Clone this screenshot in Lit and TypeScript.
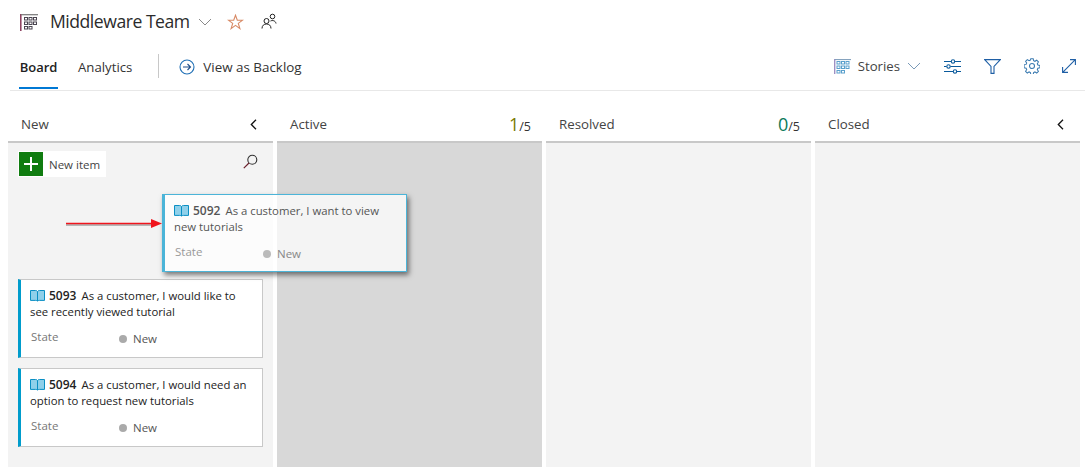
import { LitElement, html, css, svg } from "lit";
import { customElement } from "lit/decorators.js";

const cells = (c1: string) => svg`
  <g fill="none" stroke="${c1}" stroke-width="1">
    <rect x="4.500" y="3.500" width="3" height="2.500"/><rect x="9" y="3.500" width="3" height="2.500"/><rect x="13.500" y="3.500" width="3" height="2.500"/>
    <rect x="4.500" y="8" width="3" height="2.500"/><rect x="9" y="8" width="3" height="2.500"/><rect x="13.500" y="8" width="3" height="2.500"/>
    <rect x="4.500" y="12.500" width="3" height="2.500"/><rect x="9" y="12.500" width="3" height="2.500"/>
  </g>`;

const book = html`<svg class="book" width="15" height="13" viewBox="0 0 15 13">
  <path d="M.5 1.500h5c1 0 1.500.3 2 1v9.500c-.5-.4-1-.6-2-.6h-5z" fill="#8fd0ea" stroke="#0a8fc4"/>
  <path d="M14.500 1.500h-5c-1 0-1.500.3-2 1v9.500c.5-.4 1-.6 2-.6h5z" fill="#8fd0ea" stroke="#0a8fc4"/>
</svg>`;

const collapse = html`<svg class="coll" width="7" height="11" viewBox="0 0 7 11"><path d="M6 .8L1.300 5.500 6 10.200" fill="none" stroke="#111" stroke-width="1.300"/></svg>`;

@customElement("app-root")
export class AppRoot extends LitElement {
  static styles = css`
    :host { display: block; width: 1085px; height: 467px; overflow: hidden; position: relative; background: #fff; font-family: "Open Sans", "Noto Sans", sans-serif; color: #333; }
    svg { display: block; flex: none; }
    .title { height: 45px; box-sizing: border-box; display: flex; align-items: center; padding: 0 0 1px 20px; }
    .title h1 { margin: 0 0 2px 12px; font-size: 17.6px; font-weight: 400; color: #2b2b2b; letter-spacing: -0.48px; line-height: 24px; width: 139px; white-space: nowrap; }
    .title .chev { margin-left: 9px; }
    .title .star { margin-left: 15px; }
    .title .team { margin: -2px 0 0 17px; }
    .nav { height: 46px; box-sizing: border-box; margin-left: 10px; border-bottom: 1px solid #e8e8e8; display: flex; align-items: flex-start; padding-left: 9px; padding-right: 9px; font-size: 13.2px; }
    .tab { display: flex; align-items: center; box-sizing: border-box; height: 44px; padding-top: 1px; border-bottom: 2px solid transparent; color: #333; }
    .tab.on { width: 39px; border-bottom-color: #0078d4; font-weight: 600; font-size: 13px; color: #222; margin-right: 20px; justify-content: center; }
    .sep { width: 1px; height: 24px; background: #c8c8c8; margin: 9px 20px 0 26px; }
    .back { display: flex; align-items: center; gap: 8px; height: 44px; color: #333; }
    .back span { font-size: 13.4px; }
    .spacer { flex: 1; }
    .tools { display: flex; align-items: center; height: 42px; }
    .stories { display: flex; align-items: center; gap: 7px; margin-right: 23px; color: #444; }
    .tools .ic { margin-left: 23px; }
    .tools .ic.exp { margin-left: 22px; }
    .tools .ic:first-of-type { margin-left: 0; }
    .board { display: flex; gap: 4px; padding: 19px 5px 0 8px; height: 376px; box-sizing: border-box; }
    .col { width: 265px; display: flex; flex-direction: column; flex: none; }
    .head { display: flex; align-items: center; justify-content: space-between; padding: 0 10px 4px 13px; font-size: 13.3px; color: #444; flex: none; border-bottom: 2.500px solid #c8c8c8; box-sizing: border-box; height: 33px; }
    .coll { margin: 2px 6px 0 0; }
    .count { font-size: 12.500px; color: #333; display: flex; align-items: baseline; padding-right: 1px; margin-top: 2px; }
    .count b { font-weight: 400; font-size: 18px; line-height: 20px; }
    .count .a { color: #7a7a00; }
    .count .z { color: #0b7a5a; }
    .body { flex: 1; background: #f3f3f3; position: relative; padding: 0 10px; }
    .body.drop { background: #d8d8d8; }
    .add { display: flex; justify-content: space-between; padding: 8px 5px 0 0; height: 26px; }
    .btn { display: flex; align-items: center; background: #fff; height: 26px; font-size: 11.500px; color: #444; padding-right: 6px; padding-left: 1px; }
    .plus { width: 24px; height: 24px; background: #107c10; display: flex; align-items: center; justify-content: center; margin-right: 6px; }
    .search { margin-top: 3px; }
    .gap { height: 102px; }
    .card { width: 245px; box-sizing: border-box; background: #fff; border: 1px solid #c8c8c8; border-left: 3px solid #009ccc; padding: 8px 9px 0 9px; height: 79px; margin-bottom: 10px; font-size: 11.350px; color: #222; line-height: 16px; }
    .line { display: block; }
    .line svg { display: inline-block; vertical-align: -2px; margin-right: 4px; }
    .line b { font-size: 12px; font-weight: 600; margin-right: 5px; }
    .meta { display: flex; font-size: 11.500px; margin-top: 9px; margin-left: 1px; line-height: 16px; }
    .meta .lbl { width: 88px; color: #777; }
    .meta .val { display: flex; align-items: center; gap: 6px; margin-top: 2px; color: #555; }
    .dot { width: 8px; height: 8px; border-radius: 50%; background: #aaa; }
    .float { position: absolute; left: 162px; top: 194px; margin: 0; width: 245px; height: 78px; border: 1px solid #4bb4d8; border-left: 3px solid #4bb4d8; background: rgba(255,255,255,.72); box-shadow: 2px 3px 5px rgba(0,0,0,.5); color: #555; }
    .float .lbl { color: #999; }
    .float .val { color: #888; }
    .float .dot { background: #bbb; }
    .arrow { position: absolute; left: 64px; top: 216px; }
  `;

  private card(id: string, text: string, cls = "") {
    return html`<div class="card ${cls}">
      <div class="line">${book}<b>${id}</b>${text}</div>
      <div class="meta"><span class="lbl">State</span><span class="val"><i class="dot"></i>New</span></div>
    </div>`;
  }

  render() {
    return html`
      <div class="title">
        <svg width="18" height="17" viewBox="0 0 18 17"><path d="M.8 0v17" stroke="#8a3a5a" stroke-width="1.500"/><path d="M1 .700h17" stroke="#777" stroke-width="1.200"/>${cells("#4a4550")}</svg>
        <h1>Middleware Team</h1>
        <svg class="chev" width="14" height="8" viewBox="0 0 14 8"><path d="M1 1l6 6 6-6" fill="none" stroke="#8a8a8a" stroke-width="1"/></svg>
        <svg class="star" width="17" height="16" viewBox="0 0 17 16"><path d="M8.500 1.200l1.800 5h5.300l-4.300 3.200 1.600 5.200-4.400-3.200-4.400 3.200 1.600-5.200L1.400 6.200h5.300z" fill="none" stroke="#d88a66" stroke-width="1.100"/></svg>
        <svg class="team" width="16" height="17" viewBox="0 0 16 17"><g fill="none" stroke="#222" stroke-width="1"><circle cx="5.500" cy="8" r="2.500"/><path d="M1 15.500c0-3 2-4.500 4.500-4.500S10 12.500 10 15.500"/><circle cx="11.500" cy="3.500" r="2.300"/><path d="M9.500 8c1.800-1 5-.5 5.500 2.500"/></g></svg>
      </div>
      <div class="nav">
        <div class="tab on">Board</div>
        <div class="tab">Analytics</div>
        <div class="sep"></div>
        <div class="back">
          <svg width="16" height="16" viewBox="0 0 16 16"><circle cx="8" cy="8" r="7" fill="none" stroke="#1f6fb5" stroke-width="1.100"/><path d="M4 8h7.500M8.500 5l3 3-3 3" fill="none" stroke="#1f4f8a" stroke-width="1.100"/></svg>
          <span>View as Backlog</span>
        </div>
        <div class="spacer"></div>
        <div class="tools">
          <div class="stories">
            <svg width="17" height="15" viewBox="0 0 17 15"><path d="M.7 0v15" stroke="#9a8ac0" stroke-width="1.300"/><path d="M1 .600h16" stroke="#7a9ab8" stroke-width="1"/><g fill="none" stroke="#5aa0cc" stroke-width="1"><rect x="3" y="2.500" width="3" height="2.500"/><rect x="7.500" y="2.500" width="3" height="2.500"/><rect x="12" y="2.500" width="3" height="2.500"/><rect x="3" y="7" width="3" height="2.500"/><rect x="7.500" y="7" width="3" height="2.500"/><rect x="12" y="7" width="3" height="2.500"/><rect x="3" y="11.500" width="3" height="2.500"/><rect x="7.500" y="11.500" width="3" height="2.500"/></g></svg>
            <span>Stories</span>
            <svg width="14" height="8" viewBox="0 0 14 8"><path d="M1 1l6 6 6-6" fill="none" stroke="#7a9ab8" stroke-width="1"/></svg>
          </div>
          <svg class="ic" width="17" height="15" viewBox="0 0 17 15"><g fill="none" stroke="#0a5a9c" stroke-width="1.100"><path d="M0 2.500h7M11 2.500h6M0 7.500h2.500M6.500 7.500H17M0 12.500h9M13 12.500h4"/><circle cx="9" cy="2.500" r="1.700"/><circle cx="4.500" cy="7.500" r="1.700"/><circle cx="11" cy="12.500" r="1.700"/></g></svg>
          <svg class="ic" width="17" height="15" viewBox="0 0 17 15"><path d="M.7.600h15.600L10 7.500V14.400H7V7.500z" fill="none" stroke="#1f5fa5" stroke-width="1.100"/></svg>
          <svg class="ic" width="16" height="16" viewBox="0 0 16 16"><g fill="none" stroke="#3a7ab0" stroke-width="1.050"><path d="M6.800.7h2.400l.4 2 1.300.6 1.800-1.100 1.700 1.700-1.100 1.800.6 1.300 2 .4v2.400l-2 .4-.6 1.300 1.100 1.800-1.700 1.700-1.800-1.100-1.300.6-.4 2H6.800l-.4-2-1.300-.6-1.800 1.100-1.700-1.700 1.100-1.800-.6-1.300-2-.4V6.800l2-.4.6-1.300-1.100-1.800 1.700-1.700 1.800 1.100 1.300-.6z"/><circle cx="8" cy="8" r="2.500"/></g></svg>
          <svg class="ic exp" width="14" height="14" viewBox="0 0 14 14"><path d="M.7 13.300L13.300.7M8 .6h5.400V6M.6 8v5.400H6" fill="none" stroke="#1f5fa5" stroke-width="1.100"/></svg>
        </div>
      </div>
      <div class="board">
        <div class="col">
          <div class="head"><span>New</span>${collapse}</div>
          <div class="body">
            <div class="add">
              <div class="btn"><span class="plus"><svg width="14" height="14" viewBox="0 0 14 14"><path d="M7 0v14M0 7h14" stroke="#fff" stroke-width="2"/></svg></span>New item</div>
              <svg class="search" width="15" height="15" viewBox="0 0 15 15"><circle cx="9.300" cy="5.700" r="4.500" fill="none" stroke="#333" stroke-width="1.100"/><path d="M6 9L.8 14.200" stroke="#6a1f2a" stroke-width="1.200"/></svg>
            </div>
            <div class="gap"></div>
            ${this.card("5093", "As a customer, I would like to see recently viewed tutorial")}
            ${this.card("5094", "As a customer, I would need an option to request new tutorials")}
          </div>
        </div>
        <div class="col">
          <div class="head"><span>Active</span><span class="count"><b class="a">1</b>/5</span></div>
          <div class="body drop"></div>
        </div>
        <div class="col">
          <div class="head"><span>Resolved</span><span class="count"><b class="z">0</b>/5</span></div>
          <div class="body"></div>
        </div>
        <div class="col">
          <div class="head"><span>Closed</span>${collapse}</div>
          <div class="body"></div>
        </div>
      </div>
      ${this.card("5092", "As a customer, I want to view new tutorials", "float")}
      <svg class="arrow" width="100" height="14" viewBox="0 0 100 14"><path d="M2 9h88" stroke="#000" stroke-opacity=".25" stroke-width="2"/><path d="M2 7.500h88" stroke="#f0141c" stroke-width="1.300"/><path d="M87 3l11 4.500L87 12z" fill="#f0141c"/></svg>
    `;
  }
}
